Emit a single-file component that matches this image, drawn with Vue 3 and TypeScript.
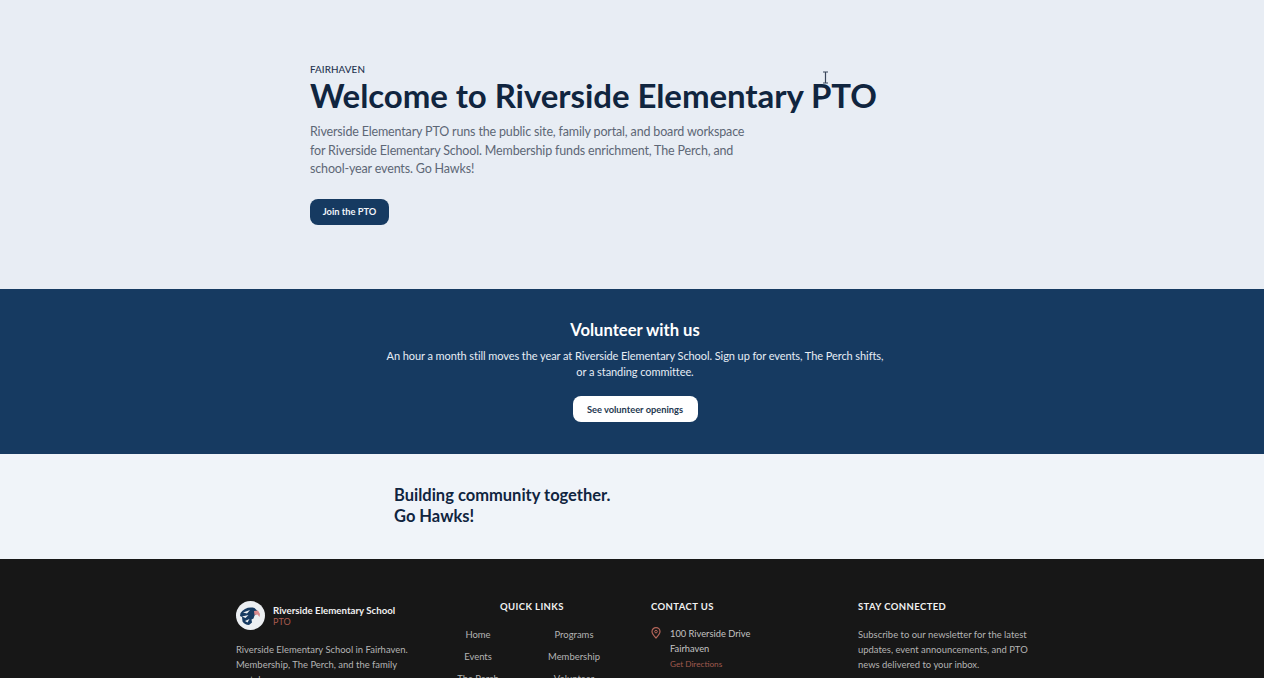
<template>
  <div class="page">
    <div class="top_line"></div>
    <section class="hero">
      <div class="eyebrow">FAIRHAVEN</div>
      <h1>Welcome to Riverside Elementary PTO</h1>
      <p class="lead">
        Riverside Elementary PTO runs the public site, family portal, and board workspace<br />
        for Riverside Elementary School. Membership funds enrichment, The Perch, and<br />
        school-year events. Go Hawks!
      </p>
      <a class="btn btn_navy">Join the PTO</a>
      <svg class="cursor" width="7" height="13" viewBox="0 0 7 13">
        <path d="M1 1h5M3.5 1v11M1 12h5" fill="none" stroke="#39465a" stroke-width="1.2" />
      </svg>
    </section>

    <section class="volunteer">
      <h2>Volunteer with us</h2>
      <p>
        An hour a month still moves the year at Riverside Elementary School. Sign up for events, The Perch shifts,<br />
        or a standing committee.
      </p>
      <a class="btn btn_white">See volunteer openings</a>
    </section>

    <section class="tagline">Building community together.<br />Go Hawks!</section>

    <footer class="footer">
      <div>
        <div class="brand">
          <svg class="logo" width="29" height="29" viewBox="0 0 29 29">
            <circle cx="14.5" cy="14.5" r="14.5" fill="#eceff2" />
            <path d="M4.500 12C7.500 7.500 13 5.500 18.500 7l3.500 3.500-2 3-1.500 1-1 3-2 1 .5 3-3 2.500C10 24 8 22.500 6.500 20.500L6 16l-2-1z" fill="#163a61" />
            <path d="M7 11.500l7-2.500-3 3.500zM6 15.500l6.500-1.500-3 3zM9 20l4.500-2-2 3.500z" fill="#eceff2" />
            <path d="M18 10l4-.5 2 3.500-.5 3-2-2.500-3 .5z" fill="#d98a8e" />
          </svg>
          <div>
            <div class="brand_name">Riverside Elementary School</div>
            <div class="brand_sub">PTO</div>
          </div>
        </div>
        <p class="brand_text">
          Riverside Elementary School in Fairhaven.<br />
          Membership, The Perch, and the family<br />
          portal.
        </p>
      </div>

      <div>
        <h3 class="links_title">QUICK LINKS</h3>
        <div class="links">
          <a v-for="link in quickLinks" :key="link">{{ link }}</a>
        </div>
      </div>

      <div>
        <h3>CONTACT US</h3>
        <div class="address">
          <svg width="10" height="12" viewBox="0 0 10 12">
            <path d="M5 11C3 9 1 7 1 4.600a4 4 0 0 1 8 0C9 7 7 9 5 11z" fill="none" stroke="#b5665a" stroke-width="1.200" />
            <circle cx="5" cy="4.600" r="1.300" fill="none" stroke="#b5665a" />
          </svg>
          <div>
            <div>100 Riverside Drive</div>
            <div>Fairhaven</div>
            <div class="directions">Get Directions</div>
          </div>
        </div>
      </div>

      <div>
        <h3>STAY CONNECTED</h3>
        <p class="news">
          Subscribe to our newsletter for the latest<br />
          updates, event announcements, and PTO<br />
          news delivered to your inbox.
        </p>
      </div>
    </footer>
  </div>
</template>

<script setup lang="ts">
const quickLinks: string[] = ["Home", "Programs", "Events", "Membership", "The Perch", "Volunteer"];
</script>

<style>
html,
body {
  margin: 0;
  overflow: hidden;
}
</style>

<style scoped>
.page {
  position: relative;
  height: 678px;
  overflow: hidden;
  font-family: Lato, "Noto Sans", sans-serif;
}
.top_line {
  position: absolute;
  top: 0;
  left: 0;
  right: 0;
  height: 1px;
  background: linear-gradient(90deg, #d7dce3 500px, #e9eef5 500px, #e9eef5 780px, #d7dce3 780px);
}
.hero {
  position: relative;
  height: 289px;
  box-sizing: border-box;
  padding: 63px 0 0 310px;
  background: #e8edf4;
}
.eyebrow {
  font-size: 9.8px;
  line-height: 12px;
  font-weight: 500;
  letter-spacing: 0.1px;
  color: #1f3450;
}
h1 {
  margin: -1px 0 0;
  font-size: 33px;
  line-height: 42px;
  font-weight: 700;
  letter-spacing: -0.07px;
  color: #10253f;
  white-space: nowrap;
}
.lead {
  margin: 7px 0 0;
  font-size: 12.5px;
  line-height: 18.5px;
  letter-spacing: -0.16px;
  color: #5d6776;
  white-space: nowrap;
}
.btn {
  display: inline-flex;
  align-items: center;
  justify-content: center;
  box-sizing: border-box;
  height: 26px;
  border-radius: 8px;
  font-size: 9.3px;
  font-weight: 700;
}
.btn_navy {
  width: 79px;
  margin-top: 20px;
  background: #163a61;
  color: #f2f5f9;
}
.cursor {
  position: absolute;
  left: 822px;
  top: 71px;
}
.volunteer {
  height: 165px;
  box-sizing: border-box;
  padding: 30px 0 0 6px;
  background: #163a61;
  color: #e6edf5;
  text-align: center;
}
.volunteer h2 {
  margin: 0;
  font-size: 16.6px;
  line-height: 22px;
  font-weight: 700;
  color: #fff;
}
.volunteer p {
  margin: 7px 0 0;
  font-size: 11px;
  line-height: 16px;
  letter-spacing: -0.075px;
}
.btn_white {
  width: 125px;
  margin-top: 16px;
  background: #fff;
  color: #24384f;
}
.tagline {
  height: 105px;
  box-sizing: border-box;
  padding: 31px 0 0 394px;
  background: #f0f4f9;
  font-size: 16.5px;
  line-height: 21px;
  font-weight: 700;
  color: #10253f;
}
.footer {
  display: grid;
  grid-template-columns: 194px 221px 207px 200px;
  height: 119px;
  box-sizing: border-box;
  padding: 42px 0 0 236px;
  background: #171717;
  color: #b4b4b4;
  font-size: 9.45px;
  line-height: 15px;
}
.footer h3 {
  margin: 0;
  font-size: 9.5px;
  line-height: 12px;
  font-weight: 700;
  letter-spacing: 0.4px;
  color: #f1f1f1;
}
.brand {
  display: flex;
  align-items: center;
  gap: 8px;
}
.logo {
  flex: none;
}
.brand_name {
  font-size: 9.7px;
  line-height: 11px;
  font-weight: 700;
  color: #f1f1f1;
  white-space: nowrap;
}
.brand_sub {
  font-size: 9px;
  line-height: 11px;
  color: #a85a4e;
}
.brand_text {
  margin: 12px 0 0;
  white-space: nowrap;
}
.footer .links_title {
  margin-left: 70px;
}
.links {
  display: grid;
  grid-template-columns: 96px 96px;
  row-gap: 7px;
  margin-top: 14px;
  text-align: center;
}
.address {
  display: flex;
  gap: 9px;
  margin-top: 13px;
  font-size: 9.3px;
  color: #c4c4c4;
}
.address svg {
  margin-top: 1px;
}
.directions {
  margin-top: 1px;
  font-size: 8.2px;
  color: #a05a4e;
}
.news {
  margin: 14px 0 0;
  white-space: nowrap;
}
</style>
